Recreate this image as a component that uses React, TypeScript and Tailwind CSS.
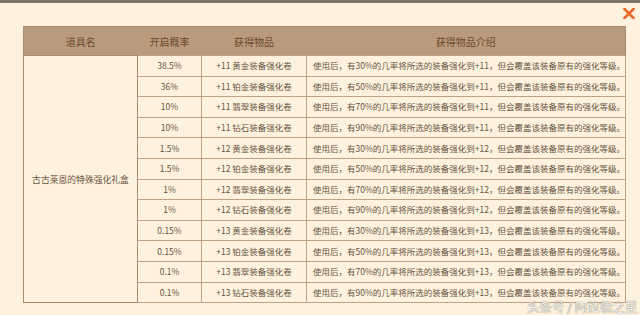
const rows = [
  { rate: "38.5%", item: "+11 黄金装备强化卷", pct: "30%", lv: "+11" },
  { rate: "36%", item: "+11 铂金装备强化卷", pct: "50%", lv: "+11" },
  { rate: "10%", item: "+11 翡翠装备强化卷", pct: "70%", lv: "+11" },
  { rate: "10%", item: "+11 钻石装备强化卷", pct: "90%", lv: "+11" },
  { rate: "1.5%", item: "+12 黄金装备强化卷", pct: "30%", lv: "+12" },
  { rate: "1.5%", item: "+12 铂金装备强化卷", pct: "50%", lv: "+12" },
  { rate: "1%", item: "+12 翡翠装备强化卷", pct: "70%", lv: "+12" },
  { rate: "1%", item: "+12 钻石装备强化卷", pct: "90%", lv: "+12" },
  { rate: "0.15%", item: "+13 黄金装备强化卷", pct: "30%", lv: "+13" },
  { rate: "0.15%", item: "+13 铂金装备强化卷", pct: "50%", lv: "+13" },
  { rate: "0.1%", item: "+13 翡翠装备强化卷", pct: "70%", lv: "+13" },
  { rate: "0.1%", item: "+13 钻石装备强化卷", pct: "90%", lv: "+13" },
];

export default function App() {
  return (
    <div
      className="relative w-[640px] h-[315px] overflow-hidden bg-[#fef2de]"
      style={{ fontFamily: '"Noto Sans CJK SC", "Noto Sans", sans-serif' }}
    >
      {/* 상단 회색 테두리 */}
      <div className="h-[3px] bg-[#7a7867]" />

      <div className="flex justify-end pt-[5px] pr-[5px] h-[23px]">
        <svg width="12" height="11" viewBox="0 0 12 11">
          <path d="M1.5 1 L10.5 10 M10.5 1 L1.5 10" stroke="#e8692a" strokeWidth="2.6" strokeLinecap="round" />
        </svg>
      </div>

      <table className="ml-[23px] table-fixed border-collapse border border-[#a88a6c] text-[#685442]">
        <colgroup>
          <col className="w-[114px]" />
          <col className="w-[64px]" />
          <col className="w-[105px]" />
          <col className="w-[317px]" />
        </colgroup>
        <thead>
          <tr className="h-[29px] bg-[#b99a7c] text-[10px] text-[#6c4b30]">
            <th className="font-normal">道具名</th>
            <th className="font-normal">开启概率</th>
            <th className="font-normal">获得物品</th>
            <th className="font-normal">获得物品介绍</th>
          </tr>
        </thead>
        <tbody className="text-[8.5px] leading-[11px]">
          {rows.map((r, i) => (
            <tr key={i} className="h-[20.6px]">
              {i === 0 && (
                <td rowSpan={12} className="border border-[#a88a6c] text-center text-[8.8px]">
                  古古莱恩的特殊强化礼盒
                </td>
              )}
              <td className="border border-[#bfa283] text-center p-0">{r.rate}</td>
              <td className="border border-[#bfa283] text-center p-0">{r.item}</td>
              <td className="border border-[#bfa283] pl-[6px] p-0 whitespace-nowrap">
                使用后，有{r.pct}的几率将所选的装备强化到{r.lv}，但会覆盖该装备原有的强化等级。
              </td>
            </tr>
          ))}
        </tbody>
      </table>

      {/* 워터마크 */}
      <div
        className="absolute left-[527px] top-[300px] text-[12.5px] leading-[13px] text-white/90 whitespace-nowrap"
        style={{ textShadow: "0 0 1px #8a8070, 0 0 1px #8a8070" }}
      >
        头条号 / 阿拉德之星
      </div>
    </div>
  );
}
